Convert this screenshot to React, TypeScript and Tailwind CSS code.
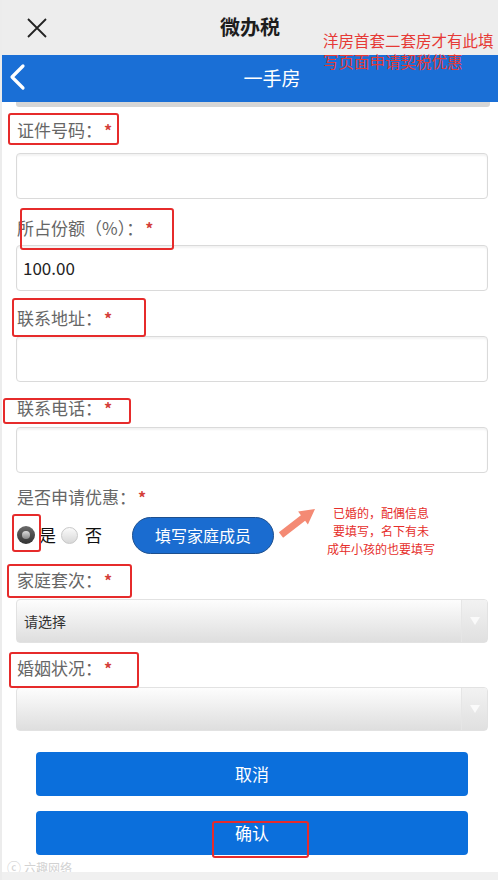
import React from "react";

const font = { fontFamily: '"Noto Sans CJK SC", "Noto Sans", sans-serif' };

function Label({ text, className }: { text: string; className: string }) {
  return (
    <div className={`flex items-center pl-[1px] text-[17px] text-[#666] ${className}`}>
      <span>{text}：</span>
      <span className="text-[#d43f3a] ml-[2px] text-[16px] font-bold">*</span>
    </div>
  );
}

function TextInput({ value }: { value?: string }) {
  return (
    <div className="h-[46px] border border-[#dadada] rounded-[4px] shadow-[inset_0_2px_2px_rgba(0,0,0,0.05)] flex items-center px-[6px] text-[17px] text-[#222]">
      {value}
    </div>
  );
}

function SelectBox({ value }: { value?: string }) {
  return (
    <div className="h-[44px] rounded-[4px] border border-[#e2e2e2] flex overflow-hidden bg-gradient-to-b from-[#fdfdfd] to-[#dedede]">
      <div className="flex-1 flex items-center px-[7px] text-[14px] text-[#333]">{value}</div>
      <div className="w-[26px] border-l border-[#e6e6e6] bg-gradient-to-b from-[#f2f2f2] to-[#e0e0e0] flex items-center justify-center">
        <svg width="10" height="8" viewBox="0 0 10 8">
          <polygon points="0,0 10,0 5,8" fill="#fafafa" />
        </svg>
      </div>
    </div>
  );
}

function RedBox({ l, t, r, b }: { l: number; t: number; r: number; b: number }) {
  return (
    <div
      className="absolute border-2 border-[#e62b2b] rounded-[3px] pointer-events-none"
      style={{ left: l, top: t, width: r - l, height: b - t }}
    />
  );
}

export default function App() {
  return (
    <div style={font} className="relative w-[498px] h-[880px] bg-white overflow-hidden border-l-[2px] border-[#ececec]">
      {/* top app bar */}
      <div className="h-[55px] bg-[#ededed] relative flex items-center justify-center">
        <svg className="absolute left-[24px] top-[17px]" width="22" height="22" viewBox="0 0 22 22">
          <path d="M2 2 L20 20 M20 2 L2 20" stroke="#222" strokeWidth="1.8" />
        </svg>
        <span className="text-[20px] font-bold text-[#1d1d1d] -mt-[2px]">微办税</span>
      </div>

      {/* blue title bar */}
      <div className="h-[47px] bg-[#1a6fd6] relative flex items-center justify-center">
        <svg className="absolute left-[5px] top-[8px]" width="20" height="28" viewBox="0 0 20 28">
          <polyline points="16,3 5,14 16,25" fill="none" stroke="#fff" strokeWidth="3.2" strokeLinecap="round" strokeLinejoin="round" />
        </svg>
        <span className="text-[19px] text-white ml-[44px]">一手房</span>
      </div>
      <div className="ml-[14px] mr-[8px] h-[5px] bg-[#d6d6d6] rounded-b-[3px]" />

      {/* form */}
      <div className="pl-[14px] pr-[10px]">
        <Label text="证件号码" className="h-[46px] pb-[1px]" />
        <TextInput />
        <Label text="所占份额（%）" className="h-[46px] pt-[12px]" />
        <TextInput value="100.00" />
        <Label text="联系地址" className="h-[45px] pt-[8px]" />
        <TextInput />
        <Label text="联系电话" className="h-[45px] pt-[6px]" />
        <TextInput />
        <Label text="是否申请优惠" className="h-[42px] pt-[5px]" />

        <div className="h-[40px] flex items-center">
          <div className="w-[18px] h-[18px] rounded-full bg-gradient-to-b from-[#6a6a6a] to-[#333] flex items-center justify-center ml-[1px]">
            <div className="w-[8px] h-[8px] rounded-full bg-gradient-to-b from-[#ddd] to-[#888]" />
          </div>
          <span className="text-[17px] text-[#111] ml-[4px]">是</span>
          <div className="w-[17px] h-[17px] rounded-full border border-[#c8c8c8] bg-gradient-to-b from-[#fafafa] to-[#d8d8d8] ml-[5px]" />
          <span className="text-[17px] text-[#111] ml-[7px]">否</span>
          <div className="ml-[30px] w-[142px] h-[37px] rounded-full bg-[#1a6cd0] border border-[#1d4f8e] flex items-center justify-center text-[16px] text-white">
            填写家庭成员
          </div>
        </div>

        <Label text="家庭套次" className="h-[44px] pt-[6px]" />
        <SelectBox value="请选择" />
        <Label text="婚姻状况" className="h-[44px] pt-[6px]" />
        <SelectBox />
      </div>

      {/* action buttons */}
      <div className="ml-[34px] mr-[30px] mt-[21px] flex flex-col gap-[15px]">
        <div className="h-[44px] rounded-[4px] bg-[#0b6fdc] flex items-center justify-center text-[17px] text-white">取消</div>
        <div className="h-[44px] rounded-[4px] bg-[#0b6fdc] flex items-center justify-center text-[17px] text-white">确认</div>
      </div>

      {/* watermark + bottom strip */}
      <div className="absolute left-[5px] top-[857px] flex items-center gap-[3px] text-[12px] text-[#d2d2d2]">
        <span className="text-[14px]">ⓒ</span>
        <span>六趣网络</span>
      </div>
      <div className="absolute left-0 right-0 bottom-0 h-[8px] bg-[#f0f0f0]" />

      {/* annotations */}
      <div className="absolute left-[321px] top-[30px] text-[15.5px] leading-[21px] text-[#e63a36]">
        <div>洋房首套二套房才有此填</div>
        <div>写页面申请契税优惠</div>
      </div>

      <svg className="absolute left-[274px] top-[503px]" width="44" height="38" viewBox="0 0 44 38">
        <path d="M7.1 34.8 L2.9 29.2 L24.9 12.2 L22.1 8.6 L39 6 L31.9 21.4 L29.1 17.8 Z" fill="#f48a74" />
      </svg>
      <div className="absolute left-[320px] top-[504px] w-[118px] text-center text-[12px] leading-[18px] text-[#e62e2b]">
        <div>已婚的，配偶信息</div>
        <div>要填写，名下有未</div>
        <div>成年小孩的也要填写</div>
      </div>

      <RedBox l={6} t={113} r={117} b={145} />
      <RedBox l={18} t={208} r={172} b={250} />
      <RedBox l={10} t={298} r={144} b={337} />
      <RedBox l={1} t={398} r={129} b={424} />
      <RedBox l={10} t={514} r={39} b={552} />
      <RedBox l={5} t={564} r={130} b={598} />
      <RedBox l={7} t={652} r={137} b={688} />
      <RedBox l={210} t={821} r={307} b={858} />
    </div>
  );
}
